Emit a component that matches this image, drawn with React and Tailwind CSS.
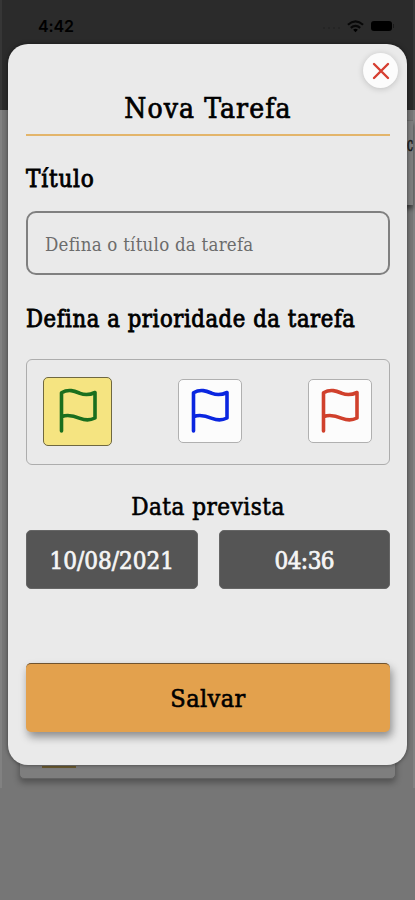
import { useState } from "react";
import clsx from "clsx";

const priorities = [
  { id: "baixa", stroke: "stroke-[#1a6f1e]" },
  { id: "media", stroke: "stroke-[#0a26e0]" },
  { id: "alta", stroke: "stroke-[#d0402c]" },
];

const FlagIcon = ({ className }) => (
  <svg
    viewBox="0 0 38 46"
    className={clsx("w-[38px] h-[46px] fill-none", className)}
    strokeWidth="3.6"
    strokeLinecap="round"
    strokeLinejoin="round"
  >
    <path d="M2.500 43V4.800C10 0.500 16 3.300 21 5.300C26 7.300 31 6.800 36 4.500V30C31 32.500 26 32.300 21 30.300C16 28.300 10 26 3 28.500" />
  </svg>
);

const StatusBar = () => (
  <div className="flex items-center h-[52px] pl-[38px] pr-[21px] text-black">
    <span className="font-['Inter'] font-semibold text-[16px] tracking-[-0.1px]">
      4:42
    </span>
    <span className="ml-auto mr-[7px] mt-1 flex gap-[3px]">
      {[0, 1, 2, 3].map((dot) => (
        <i key={dot} className="size-[2px] rounded-full bg-[#242424]" />
      ))}
    </span>
    <svg viewBox="0 0 18 13" className="w-[17px] h-[13px] fill-none stroke-[#080808]" strokeWidth="2.300">
      <path d="M1 4.600Q9 -2.400 17 4.600M4 7.900Q9 3.600 14 7.900" />
      <path d="M6.500 9.900Q9 8 11.500 9.900L9 12.600Z" className="fill-black" strokeWidth="0" />
    </svg>
    <span className="ml-[7px] w-[21px] h-[10px] rounded-[3px] bg-black" />
    <span className="ml-px w-px h-[4px] bg-[#1a1a1a]" />
  </div>
);

/* Task list dimmed behind the modal */
const Backdrop = () => (
  <div className="h-[788px] flex flex-col border-x-2 border-[#818181]">
    <div className="-mx-[2px] h-[110px] bg-[#2b2b2b] border-x-2 border-[#363636]">
      <div className="-mx-[2px]">
        <StatusBar />
      </div>
    </div>
    <div className="flex-1 flex flex-col bg-[#767676]">
      <div className="mt-[10px] ml-auto w-[12px] h-[85px] shrink-0 flex justify-end border-t border-[#6a6a6a] bg-[#7d7d7d] pt-[9px] shadow-[0_4px_4px_rgba(0,0,0,0.5)]">
        <span className="text-[20px] leading-7 text-[#1c1c1c] origin-right scale-x-60 [-webkit-text-stroke:0.7px_#1c1c1c]">
          c
        </span>
      </div>
      <div className="mt-auto mb-[9px] mx-[17px] h-[60px] rounded-[5px] border-[1.5px] border-[#626262] bg-[#7e7e7e] shadow-[0_4px_6px_rgba(0,0,0,0.3)]">
        <div className="ml-[22px] mt-[46px] w-[34px] h-[2px] bg-[#69592f]" />
      </div>
    </div>
  </div>
);

const DateButton = ({ children, className }) => (
  <button
    className={clsx(
      "flex-1 h-[59px] pt-[2px] rounded-[5px] border border-[#666666] bg-[#555555] text-[#f5f5f5] text-[24px] [-webkit-text-stroke:0.7px_#f5f5f5]",
      className
    )}
  >
    {children}
  </button>
);

const App = () => {
  const [priority, setPriority] = useState("baixa");

  return (
    <div className="relative w-[415px] h-[900px] overflow-hidden bg-[#767676] font-['Roboto_Slab','DejaVu_Serif_Condensed','DejaVu_Serif',serif] [font-stretch:condensed]">
      <Backdrop />

      {/* Modal */}
      <div className="absolute left-[8px] top-[44px] w-[399px] h-[721px] rounded-[20px] bg-[#eaeaea] shadow-[0_0_4px_rgba(0,0,0,0.5)] pl-[18px] pr-[17px] flex flex-col text-black">
        <button className="absolute right-[9px] top-[9px] size-[35px] rounded-full bg-[#fcfcfc] shadow-[0_1px_6px_rgba(0,0,0,0.18)] flex items-center justify-center">
          <svg viewBox="0 0 18 18" className="size-[18px] stroke-[#d63e31]" strokeWidth="2.400" strokeLinecap="round">
            <path d="M2 2L16 16M16 2L2 16" />
          </svg>
        </button>

        <h1 className="mt-[44px] h-[48px] leading-[42px] text-center border-b-2 border-[#e3b56b] text-[28px] tracking-[1.1px] [-webkit-text-stroke:0.7px_black]">
          Nova Tarefa
        </h1>

        <label className="mt-[27px] h-[32px] leading-[32px] text-[24px] tracking-[0.8px] [-webkit-text-stroke:0.8px_black]">
          Título
        </label>
        <input
          placeholder="Defina o título da tarefa"
          className="mt-[16px] h-[64px] pt-[2px] shrink-0 rounded-[10px] border-2 border-[#808080] px-[17px] text-[18.5px] tracking-[0.25px] placeholder:text-[#6c6c6c] outline-none"
        />

        <label className="mt-[28px] h-[32px] leading-[32px] whitespace-nowrap text-[23.5px] tracking-[0.6px] [-webkit-text-stroke:0.8px_black]">
          Defina a prioridade da tarefa
        </label>
        <div className="mt-[24px] h-[106px] shrink-0 flex items-center justify-between rounded-[6px] border-[1.5px] border-[#adadad] pl-[16px] pr-[17px] pb-[2px]">
          {priorities.map(({ id, stroke }) => (
            <button
              key={id}
              onClick={() => setPriority(id)}
              className={clsx(
                "flex items-center justify-center rounded-[5px] border",
                priority === id
                  ? "size-[69px] bg-[#f5e481] border-[#6f6840]"
                  : "size-[64px] bg-[#fcfcfc] border-[#b0b0b0]"
              )}
            >
              <FlagIcon className={stroke} />
            </button>
          ))}
        </div>

        <h2 className="mt-[26px] h-[32px] leading-[32px] text-center text-[24px] tracking-[0.5px] [-webkit-text-stroke:0.6px_black]">
          Data prevista
        </h2>
        <div className="mt-[7px] flex gap-[21px]">
          <DateButton>10/08/2021</DateButton>
          <DateButton className="tracking-[-0.5px]">04:36</DateButton>
        </div>

        <button className="mt-[74px] h-[69px] pt-[2px] shrink-0 rounded-[5px] border-t-[1.5px] border-[#70532e] bg-[#e3a14d] text-[25px] tracking-[0.4px] [-webkit-text-stroke:0.6px_black] shadow-[2px_5px_8px_rgba(0,0,0,0.4)]">
          Salvar
        </button>
      </div>
    </div>
  );
};

export default App;
